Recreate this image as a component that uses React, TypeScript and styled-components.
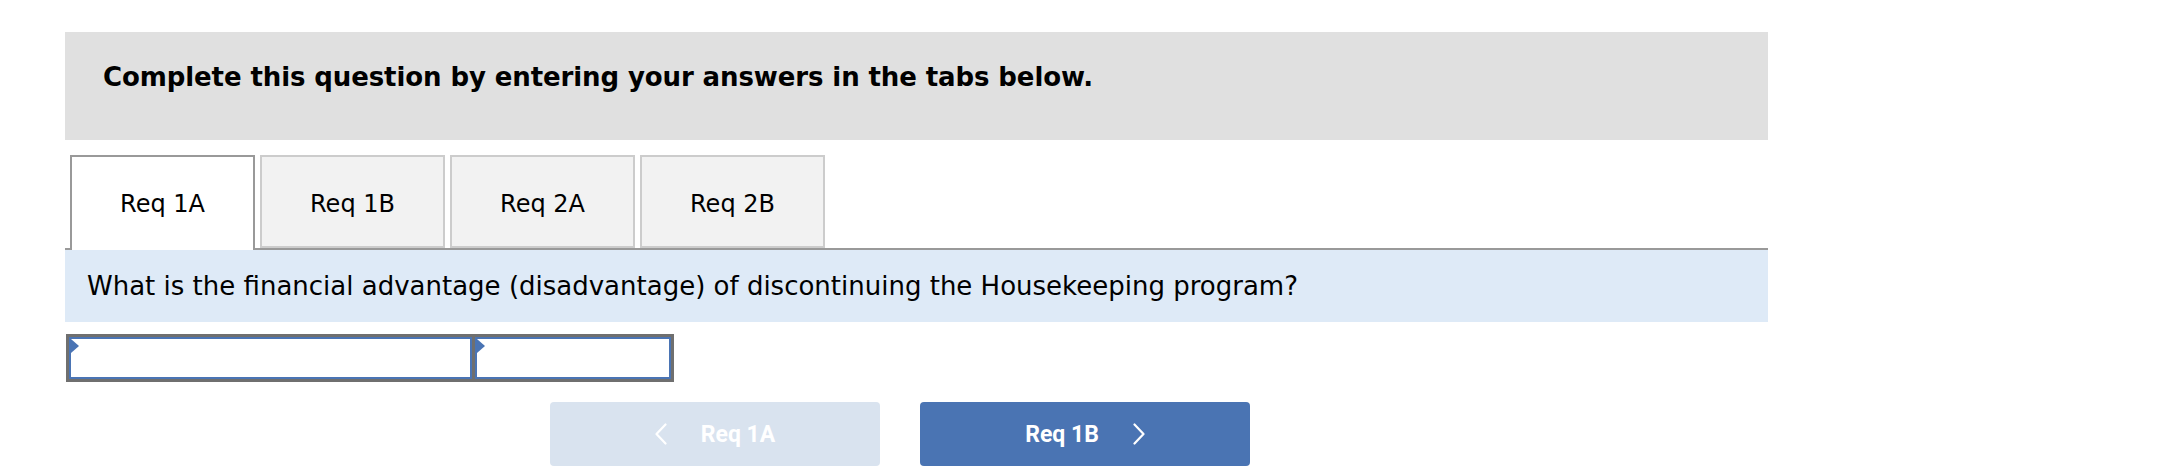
import React from "react";
import styled, { createGlobalStyle } from "styled-components";

const Global = createGlobalStyle`
  html, body { margin: 0; padding: 0; background: #ffffff; }
  body { font-family: "DejaVu Sans", Verdana, sans-serif; color: #000; }
`;

const Page = styled.div`
  width: 1703px;
  padding: 32px 0 0 65px;
  display: flex;
  flex-direction: column;
`;

const Header = styled.div`
  height: 108px;
  box-sizing: border-box;
  background: #e0e0e0;
  padding: 29px 0 0 38px;
  font-family: "DejaVu Sans", Verdana, sans-serif;
  font-weight: 700;
  font-size: 26px;
  line-height: 32px;
  letter-spacing: -0.1px;
  color: #000;
`;

const TabList = styled.div`
  margin-top: 15px;
  display: flex;
  align-items: flex-end;
  gap: 5px;
  padding-left: 5px;
  border-bottom: 2px solid #999999;
`;

const Tab = styled.div<{ $active?: boolean }>`
  width: 185px;
  box-sizing: border-box;
  height: ${(p) => (p.$active ? "95px" : "93px")};
  margin-bottom: ${(p) => (p.$active ? "-2px" : "0")};
  border: 2px solid ${(p) => (p.$active ? "#999999" : "#cccccc")};
  border-bottom: ${(p) => (p.$active ? "none" : "2px solid #cccccc")};
  background: ${(p) => (p.$active ? "#ffffff" : "#f2f2f2")};
  display: flex;
  align-items: flex-start;
  justify-content: center;
  padding-top: 33px;
  font-size: 24px;
  line-height: 28px;
  color: #000;
`;

const Question = styled.div`
  background: #deeaf7;
  padding: 21px 0 21px 22px;
  font-size: 26px;
  line-height: 30px;
  color: #000;
`;

const InputRow = styled.div`
  margin-top: 12px;
  margin-left: 1px;
  align-self: flex-start;
  display: flex;
  gap: 3px;
  border: 3px solid #6f6f6f;
  background: #6f6f6f;
`;

const Cell = styled.div<{ $w: number }>`
  position: relative;
  width: ${(p) => p.$w}px;
  height: 42px;
  box-sizing: border-box;
  border: 2px solid #4a74b4;
  background: #ffffff;
`;

const Marker = styled.span`
  position: absolute;
  left: 0;
  top: 0;
  width: 0;
  height: 0;
  border-top: 7px solid transparent;
  border-bottom: 7px solid transparent;
  border-left: 8px solid #4a74b4;
`;

const NavRow = styled.div`
  margin-top: 20px;
  padding-left: 485px;
  display: flex;
  gap: 40px;
`;

const NavButton = styled.div<{ $primary?: boolean }>`
  width: 330px;
  height: 64px;
  border-radius: 4px;
  background: ${(p) => (p.$primary ? "#4a74b3" : "#d9e3ef")};
  color: #ffffff;
  display: flex;
  align-items: center;
  justify-content: center;
  gap: 34px;
  font-family: Roboto, "Liberation Sans", sans-serif;
  font-weight: 700;
  font-size: 23px;
  letter-spacing: 0;
`;

const Chevron = ({ dir }: { dir: "left" | "right" }) => (
  <svg width="12" height="22" viewBox="0 0 12 22" fill="none">
    <polyline
      points={dir === "left" ? "10.5,1.5 1.5,11 10.5,20.5" : "1.5,1.5 10.5,11 1.5,20.5"}
      stroke="#ffffff"
      strokeWidth="2.2"
      strokeLinecap="round"
      strokeLinejoin="round"
    />
  </svg>
);

export default function App() {
  return (
    <>
      <Global />
      <Page>
        <Header>Complete this question by entering your answers in the tabs below.</Header>
        <TabList>
          <Tab $active>Req 1A</Tab>
          <Tab>Req 1B</Tab>
          <Tab>Req 2A</Tab>
          <Tab>Req 2B</Tab>
        </TabList>
        <Question>
          What is the financial advantage (disadvantage) of discontinuing the Housekeeping program?
        </Question>
        <InputRow>
          <Cell $w={403}>
            <Marker />
          </Cell>
          <Cell $w={196}>
            <Marker />
          </Cell>
        </InputRow>
        <NavRow>
          <NavButton>
            <Chevron dir="left" />
            <span>Req 1A</span>
          </NavButton>
          <NavButton $primary>
            <span>Req 1B</span>
            <Chevron dir="right" />
          </NavButton>
        </NavRow>
      </Page>
    </>
  );
}
